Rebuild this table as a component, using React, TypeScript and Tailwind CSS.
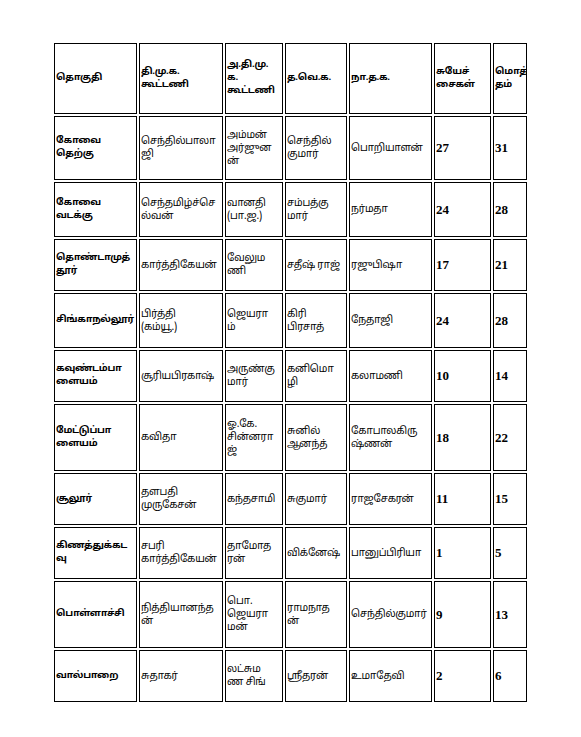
import React from "react";

type Row = {
  h: string;
  cells: string[][];
  a: string;
  b: string;
};

const header: string[][] = [
  ["தொகுதி"],
  ["தி.மு.க.", "கூட்டணி"],
  ["அ.தி.மு.", "க.", "கூட்டணி"],
  ["த.வெ.க."],
  ["நா.த.க."],
  ["சுயேச்", "சைகள்"],
  ["மொத்", "தம்"],
];

const widths = ["w-[83px]", "w-[84px]", "w-[58px]", "w-[62px]", "w-[83px]", "w-[57px]", "w-[34px]"];

const rows: Row[] = [
  { h: "h-[64px]", cells: [["கோவை", "தெற்கு"], ["செந்தில்பாலா", "ஜி"], ["அம்மன்", "அர்ஜுன", "ன்"], ["செந்தில்", "குமார்"], ["பொறியாளன்"]], a: "27", b: "31" },
  { h: "h-[55px]", cells: [["கோவை", "வடக்கு"], ["செந்தமிழ்ச்செ", "ல்வன்"], ["வானதி", "(பா.ஜ.)"], ["சம்பத்கு", "மார்"], ["நர்மதா"]], a: "24", b: "28" },
  { h: "h-[52px]", cells: [["தொண்டாமுத்", "தூர்"], ["கார்த்திகேயன்"], ["வேலும", "ணி"], ["சதீஷ் ராஜ்"], ["ரஜுபிஷா"]], a: "17", b: "21" },
  { h: "h-[55px]", cells: [["சிங்காநல்லூர்"], ["பிர்த்தி", "(கம்யூ.)"], ["ஜெயரா", "ம்"], ["கிரி", "பிரசாத்"], ["நேதாஜி"]], a: "24", b: "28" },
  { h: "h-[52px]", cells: [["கவுண்டம்பா", "ளையம்"], ["சூரியபிரகாஷ்"], ["அருண்கு", "மார்"], ["கனிமொ", "ழி"], ["கலாமணி"]], a: "10", b: "14" },
  { h: "h-[67px]", cells: [["மேட்டுப்பா", "ளையம்"], ["கவிதா"], ["ஓ.கே.", "சின்னரா", "ஜ்"], ["சுனில்", "ஆனந்த்"], ["கோபாலகிரு", "ஷ்ணன்"]], a: "18", b: "22" },
  { h: "h-[52px]", cells: [["சூலூர்"], ["தளபதி", "முருகேசன்"], ["கந்தசாமி"], ["சுகுமார்"], ["ராஜசேகரன்"]], a: "11", b: "15" },
  { h: "h-[52px]", cells: [["கிணத்துக்கட", "வு"], ["சபரி", "கார்த்திகேயன்"], ["தாமோத", "ரன்"], ["விக்னேஷ்"], ["பானுப்பிரியா"]], a: "1", b: "5" },
  { h: "h-[67px]", cells: [["பொள்ளாச்சி"], ["நித்தியானந்த", "ன்"], ["பொ.", "ஜெயரா", "மன்"], ["ராமநாத", "ன்"], ["செந்தில்குமார்"]], a: "9", b: "13" },
  { h: "h-[52px]", cells: [["வால்பாறை"], ["சுதாகர்"], ["லட்சும", "ண சிங்"], ["ஸ்ரீதரன்"], ["உமாதேவி"]], a: "2", b: "6" },
];

const cell = "border border-black align-middle text-left px-px py-0 overflow-hidden whitespace-nowrap";
const tamil = "font-['Noto_Sans_Tamil','Lohit_Tamil','Noto_Sans',sans-serif] leading-[13px] text-black";
const plain = "text-[10px] tracking-[-0.2px]";
const bold = "text-[9.5px] font-bold tracking-[-0.3px]";
const num = "font-['Liberation_Serif',serif] font-bold text-[13px] text-black";

const Lines = ({ lines }: { lines: string[] }) => (
  <>
    {lines.map((l, i) => (
      <div key={i}>{l}</div>
    ))}
  </>
);

export default function App() {
  return (
    <div className="w-[581px] h-[737px] bg-white">
      <div className="pt-[41px] pl-[52px]">
        <table className="w-[477px] table-fixed border-separate border-spacing-[2px]">
          <tbody>
            <tr className="h-[71px]">
              {header.map((c, i) => (
                <td key={i} className={`${cell} ${tamil} ${bold} ${widths[i]}`}>
                  <Lines lines={c} />
                </td>
              ))}
            </tr>
            {rows.map((r, ri) => (
              <tr key={ri} className={r.h}>
                {r.cells.map((c, ci) => (
                  <td key={ci} className={`${cell} ${tamil} ${ci === 0 ? bold : plain}`}>
                    <Lines lines={c} />
                  </td>
                ))}
                <td className={`${cell} ${num}`}>{r.a}</td>
                <td className={`${cell} ${num}`}>{r.b}</td>
              </tr>
            ))}
          </tbody>
        </table>
      </div>
    </div>
  );
}
